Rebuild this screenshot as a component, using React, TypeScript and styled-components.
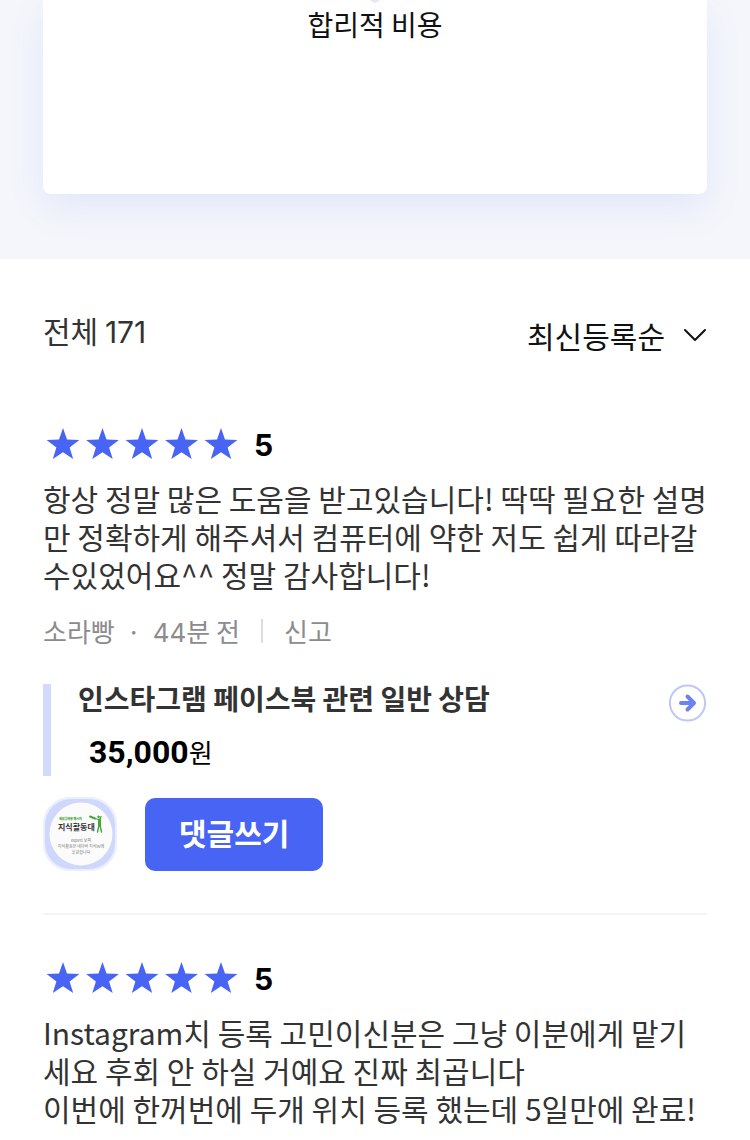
import React from "react";
import styled, { createGlobalStyle } from "styled-components";

const GlobalStyle = createGlobalStyle`
  * { box-sizing: border-box; }
  body {
    margin: 0;
    background: #fff;
    color: #333;
    font-family: "Noto Sans CJK KR", sans-serif;
    overflow-x: hidden;
  }
  h3, p { margin: 0; }
`;

const Page = styled.main`
  width: 100%;
`;

const Latin = styled.span`
  font-family: Inter, sans-serif;
  line-height: 0;
`;

const Summary = styled.section`
  padding: 0 43px 65px;
  background: #f5f6fb;
  overflow: hidden;
`;

const SummaryCard = styled.div`
  display: flex;
  flex-direction: column;
  align-items: center;
  padding-bottom: 149px;
  border-radius: 0 0 8px 8px;
  background: #fff;
  box-shadow: 0 14px 36px rgba(72, 120, 236, 0.1);
`;

const Marker = styled.svg`
  display: block;
  width: 10px;
  height: 3px;
`;

const SummaryLabel = styled.p`
  color: #111;
  font-size: 28px;
  line-height: 42px;
`;

const Reviews = styled.section`
  padding: 0 43px;
`;

const ListHeader = styled.div`
  display: flex;
  align-items: center;
  justify-content: space-between;
  padding: 50px 0 62px;
`;

const Total = styled.p`
  padding-bottom: 10px;
  font-size: 30px;
  line-height: 42px;
`;

const SortBox = styled.label`
  display: flex;
  align-items: center;
  gap: 18px;
  color: #111;
`;

const SortSelect = styled.select`
  appearance: none;
  padding: 0;
  border: 0;
  background: transparent;
  color: inherit;
  font: inherit;
  font-size: 30px;
  line-height: 44px;
`;

const Chevron = styled.svg`
  width: 24px;
  height: 14px;
`;

const Review = styled.article`
  padding-bottom: 42px;
  & + & {
    padding-top: 42px;
    border-top: 2px solid #f4f4f6;
  }
`;

const Rating = styled.div`
  display: flex;
  align-items: center;
  gap: 13px;
  height: 44px;
`;

const Stars = styled.svg`
  width: 198px;
  height: 36px;
  fill: #4864f4;
`;

const Score = styled.strong`
  color: #000;
  font-family: Inter, sans-serif;
  font-size: 30px;
  line-height: 44px;
`;

const Body = styled.p`
  margin-top: 12px;
  font-size: 30px;
  line-height: 38px;
  white-space: pre-line;
  word-break: break-all;
`;

const Meta = styled.div`
  display: flex;
  align-items: center;
  margin-top: 18px;
  color: #8c8c8c;
  font-size: 26px;
  line-height: 40px;
`;

const Dot = styled.span`
  width: 38px;
  text-align: center;
`;

const Divider = styled.span`
  width: 2px;
  height: 24px;
  margin: 0 21px;
  background: #ddd;
`;

const ReportButton = styled.button`
  padding: 0;
  border: 0;
  background: none;
  color: inherit;
  font: inherit;
`;

const Product = styled.div`
  display: flex;
  align-items: flex-start;
  justify-content: space-between;
  margin-top: 33px;
  padding-left: 27px;
  border-left: 8px solid #d1d9fc;
`;

const ProductTitle = styled.h3`
  font-size: 28px;
  line-height: 28px;
`;

const Price = styled.p`
  padding: 16px 0 0 11px;
  color: #000;
  font-size: 26px;
  line-height: 48px;
`;

const Amount = styled.strong`
  font-family: Roboto, sans-serif;
  font-size: 32px;
`;

const ProductLink = styled.a`
  display: block;
  height: 38px;
`;

const Actions = styled.div`
  display: flex;
  align-items: center;
  gap: 28px;
  margin-top: 21px;
`;

const Avatar = styled.svg`
  width: 74px;
  height: 74px;
  font-family: "Noto Sans CJK KR", sans-serif;
`;

const ReplyButton = styled.button`
  padding: 0 34px 4px;
  border: 0;
  border-radius: 10px;
  background: #4864f4;
  color: #fff;
  font: inherit;
  font-size: 30px;
  font-weight: 700;
  line-height: 69px;
`;

const STAR =
  "M16 0 L20 11.6 L32.4 12 L22.6 19.5 L26.2 31 L16 24.2 L5.8 31 L9.4 19.5 L-.4 12 L12 11.6Z";

function StarRating({ score }: { score: number }) {
  return (
    <Rating>
      <Stars viewBox="0 0 198 36" role="img" aria-label={`별점 ${score}점`}>
        {Array.from({ length: score }, (_, i) => (
          <path key={i} d={STAR} transform={`translate(${4 + i * 39.5} 1)`} />
        ))}
      </Stars>
      <Score>{score}</Score>
    </Rating>
  );
}

function ProfilePicture() {
  return (
    <Avatar viewBox="0 0 74 74" role="img" aria-label="지식활동대">
      <rect width="74" height="74" rx="27" fill="#eaeefe" />
      <rect x="2" y="2" width="70" height="70" rx="26" fill="#cfd8fc" />
      <circle cx="38" cy="37" r="31.5" fill="#fbfbfb" />
      <text x="16" y="23" fontSize="3" fontWeight="900" fill="#3aa935">세상을바꿀 메시지</text>
      <text x="15" y="33" fontSize="8" fontWeight="700" fill="#333">지식활동대</text>
      <text x="38" y="45" fontSize="4" textAnchor="middle" fill="#777">expert 보피</text>
      <text x="38" y="51" fontSize="4" textAnchor="middle" fill="#777">지식활동은 네이버 지식iN에</text>
      <text x="38" y="57" fontSize="4" textAnchor="middle" fill="#777">후원합니다</text>
      <g stroke="#45a735" fill="none" strokeLinecap="round">
        <path d="M47 19.5L52 21.5" strokeWidth="2" />
        <path d="M51 21.5L57 22.5L58 19.5" strokeWidth="1.2" />
        <path d="M56.5 23V28" strokeWidth="3" />
        <path d="M56 28L54.5 35M57 28L58.5 35" strokeWidth="1.4" />
        <circle cx="55.5" cy="19.8" r="0.8" fill="#45a735" />
      </g>
    </Avatar>
  );
}

export default function App() {
  return (
    <>
      <GlobalStyle />
      <Page>
        <Summary>
          <SummaryCard>
            <Marker viewBox="0 0 10 3" aria-hidden="true">
              <path d="M0 0H10Q7 3 5 3T0 0Z" fill="#e6e8f3" />
            </Marker>
            <SummaryLabel>합리적 비용</SummaryLabel>
          </SummaryCard>
        </Summary>
        <Reviews>
          <ListHeader>
            <Total>전체 <Latin>171</Latin></Total>
            <SortBox>
              <SortSelect aria-label="정렬">
                <option>최신등록순</option>
              </SortSelect>
              <Chevron viewBox="0 0 24 14" aria-hidden="true">
                <path d="M2 2L12 12L22 2" fill="none" stroke="#111" strokeWidth="2" strokeLinecap="round" strokeLinejoin="round" />
              </Chevron>
            </SortBox>
          </ListHeader>
          <Review>
            <StarRating score={5} />
            <Body>
              항상 정말 많은 도움을 받고있습니다! 딱딱 필요한 설명만 정확하게 해주셔서 컴퓨터에 약한 저도 쉽게 따라갈 수있었어요^^ 정말 감사합니다!
            </Body>
            <Meta>
              <span>소라빵</span>
              <Dot>·</Dot>
              <span><Latin>44</Latin>분 전</span>
              <Divider />
              <ReportButton type="button">신고</ReportButton>
            </Meta>
            <Product>
              <div>
                <ProductTitle>인스타그램 페이스북 관련 일반 상담</ProductTitle>
                <Price>
                  <Amount>35,000</Amount>원
                </Price>
              </div>
              <ProductLink href="#product" aria-label="상품 보기">
                <svg width="38" height="38" viewBox="0 0 38 38" fill="none" aria-hidden="true">
                  <circle cx="18.5" cy="19" r="17.6" stroke="#bdc8f8" strokeWidth="2" />
                  <path d="M12 19H24.5M18.5 12.5L25 19L18.5 25.5" stroke="#6c83f1" strokeWidth="4" strokeLinecap="round" strokeLinejoin="round" />
                </svg>
              </ProductLink>
            </Product>
            <Actions>
              <ProfilePicture />
              <ReplyButton type="button">댓글쓰기</ReplyButton>
            </Actions>
          </Review>
          <Review>
            <StarRating score={5} />
            <Body>
              {"Instagram치 등록 고민이신분은 그냥 이분에게 맡기세요 후회 안 하실 거예요 진짜 최곱니다\n이번에 한꺼번에 두개 위치 등록 했는데 5일만에 완료!"}
            </Body>
          </Review>
        </Reviews>
      </Page>
    </>
  );
}
